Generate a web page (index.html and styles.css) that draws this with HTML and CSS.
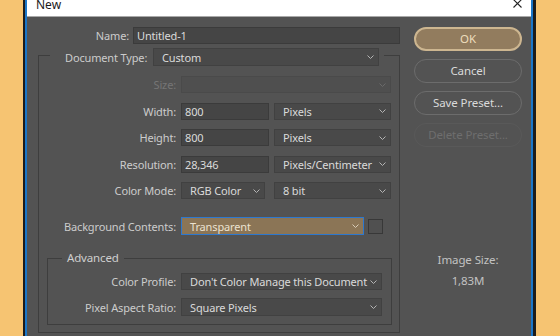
FILE: index.html
```html
<!DOCTYPE html>
<html lang="en">
<head>
    <meta charset="UTF-8">
    <title>New</title>
    <link rel="stylesheet" href="styles.css">
</head>
<body>
    <div class="window">
        <div class="titlebar">
            <span class="title">New</span>
            <svg class="close" width="9" height="9" viewBox="0 0 9 9">
                <path d="M0.5 0.5 L8.5 8.5 M8.5 0.5 L0.5 8.5" stroke="#222" stroke-width="1.1" fill="none"/>
            </svg>
        </div>

        <div class="dialog">
            <div class="form">
                <div class="name-row">
                    <label class="name-label">Name:</label>
                    <div class="field name-field">Untitled-1</div>
                </div>

                <fieldset class="group">
                    <legend class="group-head">
                        <span class="head-label">Document Type:</span>
                        <div class="field select doc-type">
                            <span>Custom</span>
                            <svg class="chev" width="7" height="4" viewBox="0 0 7 4"><polyline points="0.5,0.5 3.5,3.5 6.5,0.5"/></svg>
                        </div>
                    </legend>

                    <div class="rows">
                        <div class="row disabled">
                            <label>Size:</label>
                            <div class="field select w-full">
                                <span></span>
                                <svg class="chev" width="7" height="4" viewBox="0 0 7 4"><polyline points="0.5,0.5 3.5,3.5 6.5,0.5"/></svg>
                            </div>
                        </div>
                        <div class="row">
                            <label>Width:</label>
                            <div class="field w-num">800</div>
                            <div class="field select w-unit">
                                <span>Pixels</span>
                                <svg class="chev" width="7" height="4" viewBox="0 0 7 4"><polyline points="0.5,0.5 3.5,3.5 6.5,0.5"/></svg>
                            </div>
                        </div>
                        <div class="row">
                            <label>Height:</label>
                            <div class="field w-num">800</div>
                            <div class="field select w-unit">
                                <span>Pixels</span>
                                <svg class="chev" width="7" height="4" viewBox="0 0 7 4"><polyline points="0.5,0.5 3.5,3.5 6.5,0.5"/></svg>
                            </div>
                        </div>
                        <div class="row">
                            <label>Resolution:</label>
                            <div class="field w-num">28,346</div>
                            <div class="field select w-unit">
                                <span>Pixels/Centimeter</span>
                                <svg class="chev" width="7" height="4" viewBox="0 0 7 4"><polyline points="0.5,0.5 3.5,3.5 6.5,0.5"/></svg>
                            </div>
                        </div>
                        <div class="row">
                            <label>Color Mode:</label>
                            <div class="field select w-mode">
                                <span>RGB Color</span>
                                <svg class="chev" width="7" height="4" viewBox="0 0 7 4"><polyline points="0.5,0.5 3.5,3.5 6.5,0.5"/></svg>
                            </div>
                            <div class="field select w-unit">
                                <span>8 bit</span>
                                <svg class="chev" width="7" height="4" viewBox="0 0 7 4"><polyline points="0.5,0.5 3.5,3.5 6.5,0.5"/></svg>
                            </div>
                        </div>
                        <div class="row row-bg">
                            <label>Background Contents:</label>
                            <div class="field select active w-bg">
                                <span>Transparent</span>
                                <svg class="chev" width="7" height="4" viewBox="0 0 7 4"><polyline points="0.5,0.5 3.5,3.5 6.5,0.5"/></svg>
                            </div>
                            <div class="swatch"></div>
                        </div>

                        <fieldset class="advanced">
                            <legend>Advanced</legend>
                            <div class="adv-rows">
                                <div class="row">
                                    <label>Color Profile:</label>
                                    <div class="field select w-adv">
                                        <span>Don't Color Manage this Document</span>
                                        <svg class="chev" width="7" height="4" viewBox="0 0 7 4"><polyline points="0.5,0.5 3.5,3.5 6.5,0.5"/></svg>
                                    </div>
                                </div>
                                <div class="row row-tall">
                                    <label>Pixel Aspect Ratio:</label>
                                    <div class="field select w-adv">
                                        <span>Square Pixels</span>
                                        <svg class="chev" width="7" height="4" viewBox="0 0 7 4"><polyline points="0.5,0.5 3.5,3.5 6.5,0.5"/></svg>
                                    </div>
                                </div>
                            </div>
                        </fieldset>
                    </div>
                </fieldset>
            </div>

            <div class="side">
                <div class="btn btn-ok">OK</div>
                <div class="btn">Cancel</div>
                <div class="btn">Save Preset...</div>
                <div class="btn btn-disabled">Delete Preset...</div>

                <div class="image-size">
                    <div>Image Size:</div>
                    <div class="size-value">1,83M</div>
                </div>
            </div>
        </div>
    </div>
</body>
</html>
```

FILE: styles.css
```css
* {
    margin: 0;
    padding: 0;
    box-sizing: border-box;
}

html, body {
    height: 100%;
    overflow: hidden;
}

body {
    background: #f6c472;
    font-family: 'Noto Sans', 'Open Sans', sans-serif;
    font-size: 11px;
    letter-spacing: -0.15px;
    color: #cccccc;
}

/* Window frame */
.window {
    margin-left: 25px;
    width: 508px;
    height: 360px;
    border: 2px solid #1b76c8;
    border-top: none;
    box-shadow: 0 0 0 2px #1c1c1c, 1px 0 0 2px #1c1c1c;
    background: #535353;
    display: flex;
    flex-direction: column;
}

.titlebar {
    height: 17px;
    flex: none;
    background: #ffffff;
    border-bottom: 1px solid #a9a9a9;
    display: flex;
    align-items: flex-start;
    padding-left: 9px;
    overflow: hidden;
}

.title {
    font-size: 12px;
    letter-spacing: 0;
    line-height: 9px;
    padding-bottom: 3px;
    color: #1a1a1a;
}

.close {
    margin-left: auto;
    margin-right: 9px;
    margin-top: -1px;
}

.dialog {
    display: flex;
    padding: 10px 9px 0 11px;
}

/* Left form */
.form {
    width: 362px;
    flex: none;
}

.name-row {
    display: flex;
    align-items: center;
    height: 17px;
}

.name-label {
    width: 92px;
    text-align: right;
    margin-right: 4px;
}

.field {
    height: 17px;
    background: #454545;
    border: 1px solid #3b3b3b;
    color: #dadada;
    display: flex;
    align-items: center;
    padding: 0 3px;
    white-space: nowrap;
    overflow: hidden;
    line-height: 1;
    flex: none;
}

.name-field {
    width: 267px;
}

.select {
    background: #494949;
    border-color: #414141;
    padding: 0 4px 0 8px;
    justify-content: space-between;
}

.chev {
    flex: none;
    fill: none;
    stroke: #b4b4b4;
    stroke-width: 1;
}

.group {
    border: 1px solid #3e3e3e;
    padding: 10px 0 7px 0;
}

.group-head {
    display: flex;
    align-items: center;
    margin-left: 11px;
    padding: 4px 5px 0 15px;
}

.head-label {
    width: 88px;
    white-space: nowrap;
}

.doc-type {
    width: 226px;
    height: 18px;
}

.rows {
    display: flex;
    flex-direction: column;
    gap: 9.5px;
}

.row {
    display: flex;
    align-items: center;
    height: 17px;
}

.row label {
    width: 142px;
    flex: none;
    padding-right: 5px;
    text-align: right;
    white-space: nowrap;
}

.row.disabled label {
    color: #767676;
}

.row.disabled .field {
    background: #4f4f4f;
    border-color: #4a4a4a;
}

.row.disabled .chev {
    stroke: #6a6a6a;
}

.w-full { width: 210px; }
.w-num { width: 88px; margin-right: 5px; }
.w-unit { width: 117px; }
.w-mode { width: 84px; margin-right: 9px; }
.w-bg { width: 183px; height: 18px; margin-right: 4px; }
.w-adv { width: 201px; }

.row-bg {
    height: 18px;
    margin-top: 8.5px;
}

.active {
    background: #8b7556;
    border-color: #2d78cf;
    color: #ece2d0;
}

.active .chev {
    stroke: #d8ccb8;
}

.swatch {
    width: 15px;
    height: 15px;
    border: 1px solid #383838;
    background: #505050;
}

/* Advanced group */
.advanced {
    margin: 5.5px 0 0 8px;
    width: 345px;
    border: 1px solid #3e3e3e;
    padding: 7px 0 8px 0;
}

.advanced legend {
    margin-left: 14px;
    padding: 0 5px;
    line-height: 16px;
    font-size: 11.5px;
    color: #cfcfcf;
}

.adv-rows {
    display: flex;
    flex-direction: column;
    gap: 8px;
}

.advanced .row label {
    width: 133px;
}

.row-tall {
    height: 18px;
}

.row-tall .field {
    height: 18px;
}

/* Right column */
.side {
    width: 108px;
    margin-left: 14px;
    display: flex;
    flex-direction: column;
    font-size: 11.5px;
    letter-spacing: -0.1px;
}

.btn {
    height: 24px;
    border: 1px solid #6c6c6c;
    border-radius: 12px;
    color: #dadada;
    text-align: center;
    line-height: 22px;
    margin-bottom: 8px;
}

.btn-ok {
    background: #927c5e;
    border: 2px solid #cdb690;
    line-height: 20px;
    color: #eddcbd;
}

.btn-disabled {
    border-color: #595959;
    color: #6e6e6e;
}

.image-size {
    margin-top: 97px;
    text-align: center;
    line-height: 16px;
    color: #c2c2c2;
}

.size-value {
    margin-top: 5px;
}
```
